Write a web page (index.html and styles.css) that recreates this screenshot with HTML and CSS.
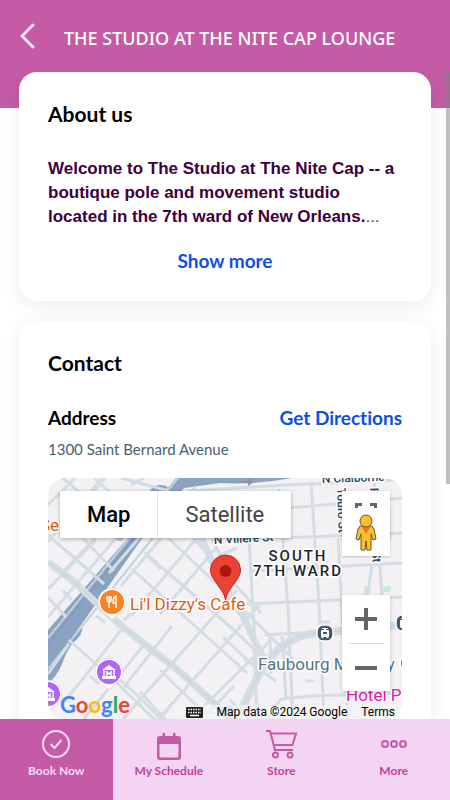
FILE: index.html
```html
<!DOCTYPE html>
<html lang="en">
<head>
    <meta charset="UTF-8">
    <meta name="viewport" content="width=device-width, initial-scale=1.0">
    <title>The Studio at the Nite Cap Lounge</title>
    <link rel="stylesheet" href="styles.css">
</head>
<body>
    <div class="app">
        <header class="header">
            <button class="back" aria-label="Back">
                <svg width="16" height="26" viewBox="0 0 16 26"><path d="M13 2 2 13l11 11"/></svg>
            </button>
            <h1 class="title">THE STUDIO AT THE NITE CAP LOUNGE</h1>
        </header>

        <main class="content">
            <section class="card">
                <h2>About us</h2>
                <p class="about"><strong>Welcome to The Studio at The Nite Cap -- a boutique pole and movement studio located in the 7th ward of New Orleans.</strong>...</p>
                <button class="link show-more">Show more</button>
            </section>

            <section class="card">
                <h2>Contact</h2>
                <div class="row">
                    <h3>Address</h3>
                    <a class="link" href="#">Get Directions</a>
                </div>
                <p class="address">1300 Saint Bernard Avenue</p>

                <div class="map">
                    <svg class="map-canvas" viewBox="0 0 354 242" preserveAspectRatio="xMidYMin slice">
                        <rect width="354" height="242" fill="#f3f1f3"/>
                        <!-- canal -->
                        <g fill="#8aa3c1">
                            <path d="M102 12q8-8 18-3l-8 8z"/>
                            <path d="M128 0h116q-38 7-72 5l-36 5-36 42L0 194v-42L86 53z"/>
                            <path d="M0 190l34-42q2 8-10 18-6 8-10 20-5 12-14 20z"/>
                        </g>
                        <path d="M130 0 88 52 0 160M148 8l-40 48L0 191" fill="none" stroke="#c3d0df" stroke-width="2"/>
                        <path d="M94 50 0 166" fill="none" stroke="#7895b8" stroke-width="1"/>
                        <!-- streets -->
                        <g class="streets">
                            <path d="M0 27 27 0M0 64l54-64M57 0 26 35M73 0l48 13M83 7l13-7M15 0l30 26M46 0l18 16"/>
                            <path d="M0 57l56 49M0 111l48-49M18 139l-18-20M24 122l-9-9M35 60l31 33M68 60 0 139"/>
                            <path d="M91 60 61 95M47 60l-34 36M113 60 73 108M149 60 84 137M168 70l-56 66M74 151 34 202l-20 24"/>
                            <path d="M113 53l87 83 45 45M145 60l68 75M96 74l81 70 30 28M84 91l115 104M113 91l-12-11M57 144l-9-6M76 142l7-6"/>
                            <path d="M189 112 75 241M211 127 110 242M222 163l-80 79M95 168 36 241M124 148l-48 61"/>
                            <path d="M21 162l45 40 41 40M42 198l9 8M60 191l30 27 24 24M112 192l40 39M92 214l26 28M0 196l21-30"/>
                            <path d="M164 60l8 17M172 77l17-7M175 159l35 33M196 181l32 22M113 240l12-16M160 235l26-27M182 222l20 20"/>
                            <path d="M139 13l98-6 117-5M198 61l-3 1M201 60l8 142M231 11l9 119 5 112M263 5l8 120 5 117M354 20l-125 11M354 55l-119 5M354 85l-150 8M354 119l-155 7M354 149l-137 8"/>
                            <path d="M290 60l10 182M326 0l8 120M206 166l3 76M222 157l1 39M234 158l4 62M354 215l-91 3-30 3-15 21M272 144h10M258 203h8M318 108v9M324 85l-4 32"/>
                        </g>
                        <g class="avenue">
                            <path d="M0 84l24 18 36 34 16 14 55 43 46 42 7 7"/>
                            <path d="M153 60l9 19 11 24 23 37 14 30 6 10"/>
                            <path d="M188 242l20-40q22-44 62-47l84-8" stroke-width="8"/>
                        </g>
                        <path d="M0 84l24 18 36 34 16 14 55 43 46 42 7 7M188 242l20-40q22-44 62-47l84-8" fill="none" stroke="#c6d0da" stroke-width="1" stroke-dasharray="12 3"/>
                        <path d="M193 4h11M200 1l4 3-4 3" fill="none" stroke="#8d9499" stroke-width="2"/>
                        <rect x="335" y="108" width="8" height="6" fill="#c2efd5"/>
                        <circle cx="72" cy="58" r="5" fill="#b9bdc2"/>

                        <!-- labels -->
                        <g class="road-label">
                            <text x="274" y="5" transform="rotate(-2 274 5)">N Claiborne</text>
                            <text x="166" y="66" transform="rotate(-3 166 66)">N Villere St</text>
                            <text x="289" y="10" transform="rotate(88 289 10)">Touro St</text>
                            <text x="322" y="10" transform="rotate(88 322 10)">Frenchmen St</text>
                        </g>
                        <g class="area-label">
                            <text x="250" y="83">SOUTH</text>
                            <text x="250" y="98">7TH WARD</text>
                        </g>
                        <text class="place-label food" x="-8" y="53">Se</text>
                        <text class="place-label food" x="82" y="132">Li'l Dizzy's Cafe</text>
                        <text class="place-label town" x="210" y="192">Faubourg Marigny</text>
                        <text class="place-label hotel" x="298" y="223">Hotel Peter</text>

                        <!-- restaurant -->
                        <g transform="translate(64 124)">
                            <path d="M0 18C-5 12-14 9-14 0a14 14 0 0 1 28 0C14 9 5 12 0 18z" fill="#fff" stroke="#c9c9c9" stroke-width=".5"/>
                            <circle r="12" fill="#fb8122"/>
                            <path d="M-5-6v4q0 2 2 2v6M-1-6v4q0 2-2 2M-3-6v6M4 6v-12q-3 1-3 7h3" fill="none" stroke="#fff" stroke-width="1.5"/>
                        </g>
                        <!-- museums -->
                        <g id="museum" transform="translate(61 194)">
                            <path d="M0 18C-5 12-14 9-14 0a14 14 0 0 1 28 0C14 9 5 12 0 18z" fill="#fff" stroke="#c9c9c9" stroke-width=".5"/>
                            <circle r="12" fill="#af66f6"/>
                            <path d="M-7-2 0-7l7 5zM-7 4H7v3H-7z" fill="#fff"/>
                            <path d="M-5-2v7M5-2v7M-2 4v-4l2 2 2-2v4" fill="none" stroke="#fff" stroke-width="1.5"/>
                        </g>
                        <use href="#museum" x="-61" y="22"/>
                        <!-- tram stops -->
                        <g id="tram" transform="translate(277 155)">
                            <rect x="-8" y="-8" width="16" height="16" rx="6" fill="#3d5a72" stroke="#fff" stroke-width="1.5"/>
                            <path d="M-3-5h6v1H1v1h2q1 0 1 1v5q0 1-1 1l1 1h-2l-1-1h-2l-1 1h-2l1-1q-1 0-1-1v-5q0-1 1-1h2v-1h-2z" fill="#fff"/>
                            <path d="M-2-1h4v2h-4z" fill="#3d5a72"/>
                        </g>
                        <use href="#tram" x="79" y="-10"/>
                        <circle cx="360" cy="185" r="8" fill="#607d8b" stroke="#fff" stroke-width="2"/>
                        <circle cx="180" cy="234" r="7" fill="#b5bbc0"/>

                        <!-- location pin -->
                        <path d="M177.5 122c-1.5-8-6-12-9-17-4-5-6-9-6-13a15 15 0 0 1 30 0c0 4-2 8-6 13-3 5-7.5 9-9 17z" fill="#ea4335" stroke="#c5221f" stroke-width="1"/>
                        <circle cx="177.5" cy="93" r="6" fill="#b31412"/>
                    </svg>

                    <div class="map-types">
                        <button class="active">Map</button>
                        <button>Satellite</button>
                    </div>
                    <button class="map-button fullscreen" aria-label="Toggle fullscreen view">
                        <svg width="22" height="22" viewBox="0 0 22 22"><path d="M1.5 7V1.5H7M15 1.5h5.5V7M1.5 15v5.5H7M15 20.5h5.5V15"/></svg>
                    </button>
                    <button class="map-button pegman" aria-label="Street View">
                        <svg width="22" height="38" viewBox="0 0 22 38">
                            <path d="M5 12h12l2 3 2 10-3 1-2-6v16h-4l-1-9-1 9H6V20l-2 6-3-1 2-10z" fill="#fdbf2d" stroke="#69532b"/>
                            <path d="M6 12h10l-5 8z" fill="#e37a2a"/>
                            <circle cx="11" cy="7" r="6" fill="#fdbf2d" stroke="#69532b"/>
                        </svg>
                    </button>
                    <div class="zoom">
                        <button aria-label="Zoom in"><svg width="22" height="22" viewBox="0 0 22 22"><path d="M11 0v22M0 11h22"/></svg></button>
                        <button aria-label="Zoom out"><svg width="22" height="22" viewBox="0 0 22 22"><path d="M0 11h22"/></svg></button>
                    </div>
                    <div class="google"><span class="blue">G</span><span class="red">o</span><span class="yellow">o</span><span class="blue">g</span><span class="green">l</span><span class="red">e</span></div>
                    <div class="credits">
                        <svg width="17" height="12" viewBox="0 0 17 12">
                            <rect width="17" height="11" rx="1" fill="#222"/>
                            <path d="M2 2.5h13M2 5.5h13" stroke="#fff" stroke-width="1.5" stroke-dasharray="1.5 1"/>
                            <path d="M4 8.5h9" stroke="#fff" stroke-width="1.5"/>
                        </svg>
                        <span>Map data ©2024 Google</span>
                        <a href="#">Terms</a>
                    </div>
                </div>
            </section>
        </main>

        <nav class="tabs">
            <a class="tab active" href="#">
                <svg width="28" height="28" viewBox="0 0 28 28"><circle cx="14" cy="14" r="13"/><path d="M8.5 14l4 4 7-8"/></svg>
                Book Now
            </a>
            <a class="tab" href="#">
                <svg width="28" height="28" viewBox="0 0 28 28"><path class="solid" d="M2 9q0-3 3-3h2.500V3H10v3h8V3h2.500v3H23q3 0 3 3v18q0 3-3 3H5q-3 0-3-3zm2.500 5v12q0 1.500 1.500 1.500h16q1.500 0 1.500-1.500V14z"/></svg>
                My Schedule
            </a>
            <a class="tab" href="#">
                <svg width="32" height="28" viewBox="0 0 32 28"><path d="M1 1h4l5 19h18M6 3.500h25L27.500 15H9"/><circle cx="10.5" cy="25" r="2.5"/><circle cx="25" cy="25" r="2.5"/></svg>
                Store
            </a>
            <a class="tab" href="#">
                <svg width="28" height="28" viewBox="0 0 28 28"><circle cx="5" cy="14" r="3"/><circle cx="14" cy="14" r="3"/><circle cx="23" cy="14" r="3"/></svg>
                More
            </a>
        </nav>
        <div class="scrollbar"></div>
    </div>
</body>
</html>
```
FILE: styles.css
```css
* {
    box-sizing: border-box;
}
body {
    margin: 0;
    font-family: Lato, sans-serif;
    font-variant-ligatures: none;
    background-color: #fff;
    color: #000;
}
h1, h2, h3, p {
    margin: 0;
}
button {
    border: none;
    padding: 0;
    background: none;
    font-family: inherit;
    cursor: pointer;
}
a {
    text-decoration: none;
}
.app {
    position: relative;
    display: flex;
    flex-direction: column;
    height: 100vh;
}
.header {
    display: flex;
    align-items: center;
    gap: 28px;
    height: 72px;
    padding: 0 20px;
    background-color: #c55ba6;
}
.back {
    display: flex;
}
.back svg {
    fill: none;
    stroke: #fbe0f6;
    stroke-width: 3;
    stroke-linecap: round;
}
.title {
    padding-top: 4px;
    font-family: "Noto Sans", sans-serif;
    font-size: 18px;
    font-weight: 500;
    color: #fff;
    white-space: nowrap;
}
.content {
    flex: 1;
    min-height: 0;
    overflow: hidden;
    padding: 0 19px;
    background: linear-gradient(#c55ba6 36px, #fff 36px);
}
.card {
    padding: 29px 29px 28px;
    margin-bottom: 20px;
    border-radius: 18px;
    background-color: #fff;
    box-shadow: 0 4px 20px rgba(30, 30, 70, 0.08);
}
h2 {
    font-size: 21px;
    line-height: 26px;
    font-weight: 700;
}
.about {
    margin-top: 30px;
    font-family: "Liberation Sans", Arial, sans-serif;
    font-size: 17px;
    line-height: 24px;
    color: #456;
}
.about strong {
    color: #3d003d;
}
.link {
    font-size: 19px;
    line-height: 24px;
    font-weight: 700;
    color: #0b4fe8;
}
.show-more {
    display: block;
    margin: 20px auto 0;
}
.row {
    display: flex;
    justify-content: space-between;
    margin-top: 30px;
}
h3 {
    font-size: 19px;
    line-height: 24px;
}
.address {
    margin-top: 9px;
    font-size: 15px;
    line-height: 20px;
    color: #456070;
}
.map {
    position: relative;
    height: 242px;
    margin-top: 19px;
    border-radius: 18px;
    overflow: hidden;
    font-family: Roboto, sans-serif;
}
.map-canvas {
    display: block;
    width: 100%;
    height: 100%;
}
.streets, .avenue {
    fill: none;
    stroke: #d4dde4;
    stroke-width: 3;
}
.avenue {
    stroke-width: 7;
}
.map-canvas text {
    paint-order: stroke;
    stroke: #fff;
    stroke-width: 3px;
    stroke-linejoin: round;
}
.road-label {
    font-size: 12px;
    font-weight: 500;
    fill: #2c4763;
}
.area-label {
    font-size: 15px;
    font-weight: 500;
    letter-spacing: 2px;
    text-anchor: middle;
    fill: #1c2329;
}
.place-label {
    font-size: 17px;
}
.food {
    fill: #d95c10;
}
.town {
    fill: #557586;
}
.hotel {
    fill: #e412b6;
}
.map-types {
    position: absolute;
    top: 13px;
    left: 12px;
    display: flex;
    background-color: #fff;
    box-shadow: 0 1px 4px rgba(0, 0, 0, 0.3);
}
.map-types button {
    height: 47px;
    padding: 0 27px;
    font-size: 22px;
    color: #444;
}
.map-types button + button {
    border-left: 1px solid #e6e6e6;
}
.map-types .active {
    font-weight: 500;
    color: #000;
}
.map-button, .zoom {
    position: absolute;
    right: 12px;
    width: 48px;
    background-color: #fff;
    box-shadow: 0 1px 4px rgba(0, 0, 0, 0.2);
}
.fullscreen {
    top: 13px;
    height: 48px;
}
.fullscreen svg, .zoom svg {
    fill: none;
    stroke: #666;
    stroke-width: 4;
}
.fullscreen svg {
    stroke-width: 3;
}
.pegman {
    top: 30px;
    height: 48px;
    padding-top: 4px;
    box-shadow: 0 1px 2px rgba(0, 0, 0, 0.2);
}
.zoom {
    top: 117px;
    padding: 0 6px;
}
.zoom button {
    display: flex;
    align-items: center;
    justify-content: center;
    width: 100%;
    height: 48px;
}
.zoom button + button {
    border-top: 1px solid #ddd;
}
.google {
    position: absolute;
    left: 12px;
    bottom: 2px;
    font-family: Lato, sans-serif;
    font-size: 22px;
    line-height: 26px;
    font-weight: 700;
}
.blue { color: #4285f4; }
.red { color: #ea4335; }
.yellow { color: #fbbc05; }
.green { color: #34a853; }
.credits {
    position: absolute;
    right: 0;
    bottom: 0;
    display: flex;
    align-items: center;
    gap: 14px;
    padding: 0 7px;
    font-size: 12px;
    line-height: 15px;
    color: #000;
    background-color: rgba(245, 245, 245, 0.7);
}
.credits a {
    color: #000;
}
.tabs {
    display: flex;
    height: 81px;
}
.tab {
    flex: 1;
    display: flex;
    flex-direction: column;
    align-items: center;
    gap: 5px;
    padding-top: 11px;
    font-size: 12px;
    line-height: 16px;
    font-weight: 700;
    color: #c03f9f;
    background-color: #f3d4f3;
}
.tab svg {
    fill: none;
    stroke: #c55ba6;
    stroke-width: 2;
    overflow: visible;
}
.tab .solid {
    fill: #c55ba6;
    fill-rule: evenodd;
    stroke: none;
}
.tab.active {
    color: #f9d9f6;
    background-color: #c55ba6;
}
.tab.active svg {
    stroke: #f9d9f6;
}
.scrollbar {
    position: absolute;
    top: 72px;
    right: 0;
    width: 4px;
    height: 412px;
    background-color: rgba(128, 128, 128, 0.5);
}
```
